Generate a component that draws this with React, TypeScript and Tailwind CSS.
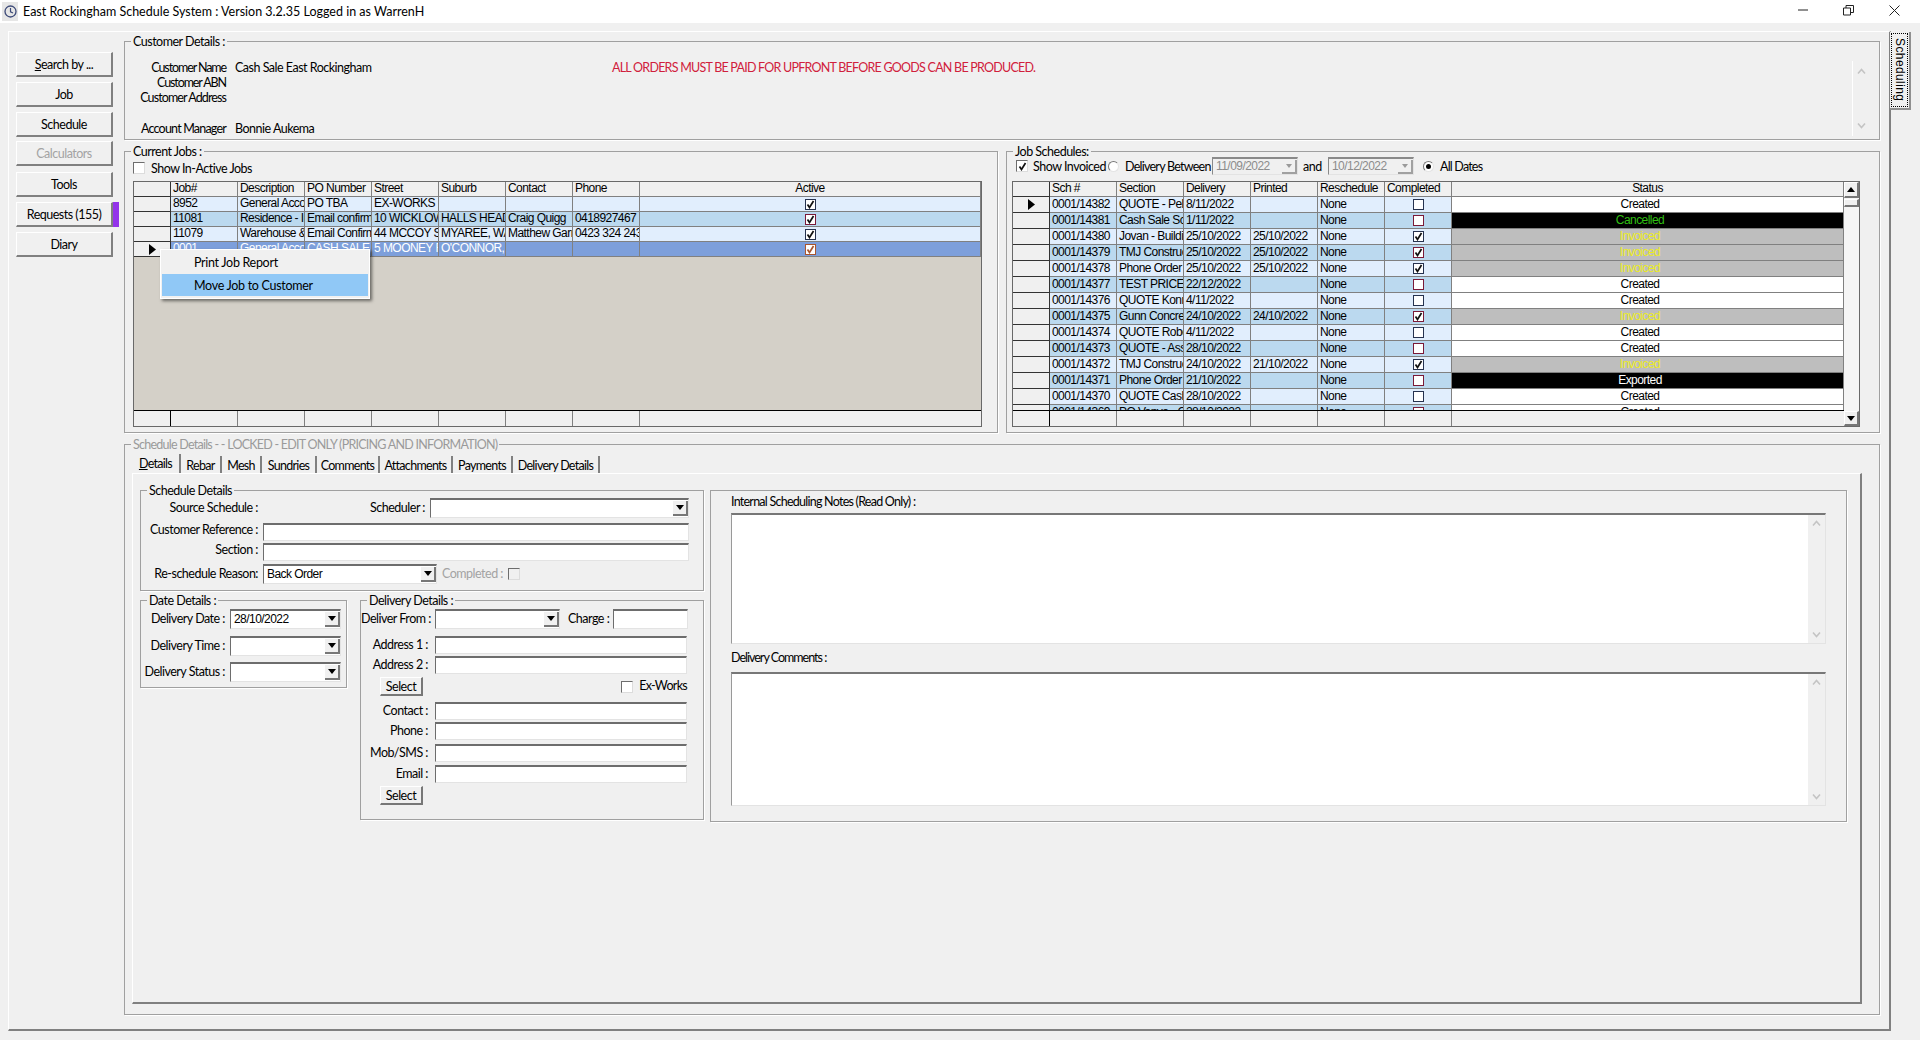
import React from "react";

type Kind = "light" | "dark" | "sel";

const rowBg: Record<Kind, string> = {
  light: "bg-[#e1eefd]",
  dark: "bg-[#bbd9ef]",
  sel: "bg-[#7d9fdb] text-white",
};
const checkBorder: Record<Kind, string> = {
  light: "border-[#26324f]",
  dark: "border-[#7a1a38]",
  sel: "border-[#a9552f]",
};

function Tri() {
  return (
    <svg width="7" height="11" viewBox="0 0 7 11">
      <path d="M0 0 L7 5.5 L0 11 Z" fill="#000" />
    </svg>
  );
}

function Chevron({ up, color = "#c4c4c4" }: { up?: boolean; color?: string }) {
  return (
    <svg width="9" height="7" viewBox="0 0 9 7">
      <path d={up ? "M1 5.5 L4.5 1.5 L8 5.5" : "M1 1.5 L4.5 5.5 L8 1.5"} fill="none" stroke={color} strokeWidth="1.6" />
    </svg>
  );
}

function Caret({ up }: { up?: boolean }) {
  return (
    <svg width="8" height="5" viewBox="0 0 8 5">
      <path d={up ? "M0 5 L4 0 L8 5 Z" : "M0 0 L8 0 L4 5 Z"} fill="#000" />
    </svg>
  );
}

function Check({ on, kind = "light" }: { on?: boolean; kind?: Kind }) {
  return (
    <span className={`flex h-[11px] w-[11px] items-center justify-center border bg-white ${checkBorder[kind]}`}>
      {on && (
        <svg width="9" height="9" viewBox="0 0 9 9">
          <path d="M1.5 4.5 L3.5 7.5 L7.5 1" fill="none" stroke={kind === "sel" ? "#a9552f" : "#111"} strokeWidth="1.7" />
        </svg>
      )}
    </span>
  );
}

function PlainCheck({ on, disabled }: { on?: boolean; disabled?: boolean }) {
  return (
    <span
      className={`flex h-[12px] w-[12px] shrink-0 items-center justify-center border border-t-[#6d6d6d] border-l-[#6d6d6d] border-r-[#dcdcdc] border-b-[#dcdcdc] ${disabled ? "bg-[#f0f0f0]" : "bg-white"}`}
    >
      {on && (
        <svg width="9" height="9" viewBox="0 0 9 9">
          <path d="M1.5 4.5 L3.5 7.5 L7.5 1" fill="none" stroke="#111" strokeWidth="1.7" />
        </svg>
      )}
    </span>
  );
}

function Radio({ on }: { on?: boolean }) {
  return (
    <span className="flex h-[11px] w-[11px] shrink-0 items-center justify-center rounded-full border border-t-[#777] border-l-[#777] border-r-[#e4e4e4] border-b-[#e4e4e4] bg-white">
      {on && <span className="h-[5px] w-[5px] rounded-full bg-black" />}
    </span>
  );
}

function Group({
  title,
  className,
  children,
  muted,
}: {
  title: string;
  className: string;
  children?: React.ReactNode;
  muted?: boolean;
}) {
  return (
    <div className={`relative border border-[#a0a0a0] shadow-[1px_1px_0_#fff] ${className}`}>
      {title && (
        <span
          className={`absolute -top-[8px] left-[6px] h-[15px] bg-[#f0f0f0] px-[2px] leading-[15px] ${muted ? "text-[#9a9a9a] tracking-[-0.75px]" : ""}`}
        >
          {title}
        </span>
      )}
      {children}
    </div>
  );
}

function Input({ className }: { className: string }) {
  return (
    <div
      className={`shrink-0 border-t-2 border-l border-r border-b border-t-[#6d6d6d] border-l-[#6d6d6d] border-r-[#e3e3e3] border-b-[#e3e3e3] bg-white ${className}`}
    />
  );
}

function Combo({ className, value }: { className: string; value?: string }) {
  return (
    <div
      className={`flex h-[20px] shrink-0 items-center justify-between border-t-2 border-l border-r border-b border-t-[#6d6d6d] border-l-[#6d6d6d] border-r-[#e3e3e3] border-b-[#e3e3e3] bg-white pl-[3px] ${className}`}
    >
      <span className="font-['Liberation_Sans',sans-serif] text-[12px] tracking-[-0.55px]">{value}</span>
      <span className="flex h-[15px] w-[15px] items-center justify-center border-r-2 border-b-2 border-r-[#777] border-b-[#777] bg-[#f0f0f0]">
        <Caret />
      </span>
    </div>
  );
}

function DateBox({ value }: { value: string }) {
  return (
    <div className="flex h-[18px] w-[86px] shrink-0 items-center justify-between border-t-2 border-l border-r border-b border-t-[#8a8a8a] border-l-[#8a8a8a] border-r-[#e3e3e3] border-b-[#e3e3e3] bg-[#f0f0f0] pl-[3px] font-['Liberation_Sans',sans-serif] text-[12px] tracking-[-0.55px] text-[#8c8c8c]">
      <span>{value}</span>
      <span className="flex h-[14px] w-[15px] items-center justify-center border-r-2 border-b-2 border-r-[#a0a0a0] border-b-[#a0a0a0] bg-[#f0f0f0]">
        <svg width="6" height="4" viewBox="0 0 6 4">
          <path d="M0 0 L6 0 L3 4 Z" fill="#9a9a9a" />
        </svg>
      </span>
    </div>
  );
}

function SmallButton() {
  return (
    <div className="flex h-[19px] w-[43px] shrink-0 items-center justify-center border-t border-l border-r-2 border-b-2 border-t-white border-l-white border-r-[#777] border-b-[#777]">
      Select
    </div>
  );
}

function Label({ className, children }: { className: string; children: React.ReactNode }) {
  return <span className={`shrink-0 pb-[2px] text-right ${className}`}>{children}</span>;
}

function SideButton({ children, disabled, className }: { children: React.ReactNode; disabled?: boolean; className: string }) {
  return (
    <div
      className={`flex h-[25px] w-[97px] items-center justify-center border-t border-l border-r-2 border-b-2 border-t-white border-l-white border-r-[#808080] border-b-[#808080] ${disabled ? "text-[#a3a3a3]" : ""} ${className}`}
    >
      {children}
    </div>
  );
}

const cell = "overflow-hidden border-r border-b border-r-[#808080] border-b-[#808080] px-[2px]";
const indCell = "flex items-center justify-center border-r border-b border-r-[#333] border-b-[#333] bg-[#f0f0f0]";

const jobCols = "grid grid-cols-[37px_67px_67px_67px_67px_67px_67px_67px_1fr]";
const jobHeads = ["Job#", "Description", "PO Number", "Street", "Suburb", "Contact", "Phone"];
const jobs: { kind: Kind; c: string[]; mark?: boolean }[] = [
  { kind: "light", c: ["8952", "General Account", "PO TBA", "EX-WORKS", "", "", ""] },
  { kind: "dark", c: ["11081", "Residence - Ironbark", "Email confirmation", "10 WICKLOW ST", "HALLS HEAD, WA", "Craig Quigg", "0418927467"] },
  { kind: "light", c: ["11079", "Warehouse & Office", "Email Confirmation", "44 MCCOY ST", "MYAREE, WA", "Matthew Garner", "0423 324 243"] },
  { kind: "sel", mark: true, c: ["0001", "General Account", "CASH SALE", "5 MOONEY RD", "O'CONNOR, WA", "", ""] },
];

const schCols = "grid grid-cols-[37px_67px_67px_67px_67px_67px_67px_1fr]";
const schHeads = ["Sch #", "Section", "Delivery", "Printed", "Reschedule", "Completed"];
type Status = "Created" | "Cancelled" | "Invoiced" | "Exported";
const statusCls: Record<Status, string> = {
  Created: "bg-white text-black",
  Cancelled: "bg-black text-[#2fbf12]",
  Invoiced: "bg-[#bebebe] text-[#ecec1e]",
  Exported: "bg-black text-white",
};
const schedules: [string, string, string, string, boolean, Status][] = [
  ["0001/14382", "QUOTE - Pella", "8/11/2022", "", false, "Created"],
  ["0001/14381", "Cash Sale Screen", "1/11/2022", "", false, "Cancelled"],
  ["0001/14380", "Jovan - Building", "25/10/2022", "25/10/2022", true, "Invoiced"],
  ["0001/14379", "TMJ Construction", "25/10/2022", "25/10/2022", true, "Invoiced"],
  ["0001/14378", "Phone Order", "25/10/2022", "25/10/2022", true, "Invoiced"],
  ["0001/14377", "TEST PRICE", "22/12/2022", "", false, "Created"],
  ["0001/14376", "QUOTE Konrad", "4/11/2022", "", false, "Created"],
  ["0001/14375", "Gunn Concrete", "24/10/2022", "24/10/2022", true, "Invoiced"],
  ["0001/14374", "QUOTE Robert", "4/11/2022", "", false, "Created"],
  ["0001/14373", "QUOTE - Assen", "28/10/2022", "", false, "Created"],
  ["0001/14372", "TMJ Construction", "24/10/2022", "21/10/2022", true, "Invoiced"],
  ["0001/14371", "Phone Order", "21/10/2022", "", false, "Exported"],
  ["0001/14370", "QUOTE Cash", "28/10/2022", "", false, "Created"],
  ["0001/14369", "PO Vanya - O", "28/10/2022", "", false, "Created"],
];

const tabs: [string, string][] = [
  ["Rebar", "w-[41px]"],
  ["Mesh", "w-[40px]"],
  ["Sundries", "w-[55px]"],
  ["Comments", "w-[63px]"],
  ["Attachments", "w-[73px]"],
  ["Payments", "w-[60px]"],
  ["Delivery Details", "w-[87px]"],
];

function JobsGrid() {
  return (
    <div className="relative flex h-[246px] w-[849px] flex-col border border-[#696969] font-['Liberation_Sans',sans-serif] text-[12px] leading-[13px] tracking-[-0.55px]">
      <div className={`${jobCols} h-[15px]`}>
        <div className={indCell} />
        {jobHeads.map((h) => (
          <div key={h} className={`${cell} bg-[#f0f0f0]`}>{h}</div>
        ))}
        <div className={`${cell} bg-[#f0f0f0] text-center`}>Active</div>
      </div>
      {jobs.map((r) => (
        <div key={r.c[0]} className={`${jobCols} h-[15px]`}>
          <div className={indCell}>{r.mark && <Tri />}</div>
          {r.c.map((t, i) => (
            <div key={i} className={`${cell} ${rowBg[r.kind]}`}>{t}</div>
          ))}
          <div className={`${cell} ${rowBg[r.kind]} flex items-center justify-center`}>
            <Check on kind={r.kind} />
          </div>
        </div>
      ))}
      <div className="flex-1 bg-[#d4d0c8]" />
      <div className={`${jobCols} h-[16px] border-t border-t-black`}>
        <div className="border-r border-r-black bg-[#f0f0f0]" />
        {[0, 1, 2, 3, 4, 5, 6, 7].map((i) => (
          <div key={i} className="border-r border-r-[#808080] bg-[#f0f0f0] last:border-r-0" />
        ))}
      </div>
      <div className="absolute left-[26px] top-[67px] z-10 h-[50px] w-[210px] border border-white bg-[#f0f0f0] p-[1px] font-['Lato',sans-serif] text-[12.5px] tracking-[-0.3px] shadow-[2px_2px_3px_rgba(0,0,0,0.5)]">
        <div className="flex h-[23px] items-center pl-[32px]">Print Job Report</div>
        <div className="flex h-[22px] items-center bg-[#90c8f6] pl-[32px]">Move Job to Customer</div>
      </div>
    </div>
  );
}

function SchedulesGrid() {
  return (
    <div className="flex h-[246px] w-[848px] border border-[#696969] font-['Liberation_Sans',sans-serif] text-[12px] leading-[14px] tracking-[-0.55px]">
      <div className="flex w-[831px] flex-col">
        <div className={`${schCols} h-[15px] leading-[13px]`}>
          <div className={indCell} />
          {schHeads.map((h) => (
            <div key={h} className={`${cell} bg-[#f0f0f0]`}>{h}</div>
          ))}
          <div className={`${cell} bg-[#f0f0f0] text-center`}>Status</div>
        </div>
        <div className="h-[214px] overflow-hidden">
          {schedules.map((r, i) => {
            const kind: Kind = i % 2 === 0 ? "light" : "dark";
            return (
              <div key={r[0]} className={`${schCols} h-[16px]`}>
                <div className={indCell}>{i === 0 && <Tri />}</div>
                <div className={`${cell} ${rowBg[kind]}`}>{r[0]}</div>
                <div className={`${cell} ${rowBg[kind]}`}>{r[1]}</div>
                <div className={`${cell} ${rowBg[kind]}`}>{r[2]}</div>
                <div className={`${cell} ${rowBg[kind]}`}>{r[3]}</div>
                <div className={`${cell} ${rowBg[kind]}`}>None</div>
                <div className={`${cell} ${rowBg[kind]} flex items-center justify-center`}>
                  <Check on={r[4]} kind={kind} />
                </div>
                <div className={`${cell} ${statusCls[r[5]]} pr-[17px] text-center`}>{r[5]}</div>
              </div>
            );
          })}
        </div>
        <div className={`${schCols} h-[16px] border-t border-t-black`}>
          <div className="border-r border-r-black bg-[#f0f0f0]" />
          {[0, 1, 2, 3, 4, 5, 6].map((i) => (
            <div key={i} className="border-r border-r-[#808080] bg-[#f0f0f0] last:border-r-0" />
          ))}
        </div>
      </div>
      <div className="flex w-[15px] flex-col bg-[#f5f5f5]">
        <div className="flex h-[16px] items-center justify-center border-t border-l border-r-2 border-b-2 border-t-white border-l-white border-r-[#777] border-b-[#777] bg-[#f0f0f0]">
          <Caret up />
        </div>
        <div className="mt-[1px] h-[8px] border-t border-l border-r-2 border-b-2 border-t-white border-l-white border-r-[#777] border-b-[#777] bg-[#f0f0f0]" />
        <div className="flex-1" />
        <div className="flex h-[15px] items-center justify-center border-t border-l border-r-2 border-b-2 border-t-white border-l-white border-r-[#777] border-b-[#777] bg-[#f0f0f0]">
          <Caret />
        </div>
      </div>
    </div>
  );
}

function NoteBox({ className }: { className: string }) {
  return (
    <div className={`ml-[20px] flex w-[1095px] border-t-2 border-l border-r border-b border-t-[#777] border-l-[#999] border-r-[#e3e3e3] border-b-[#e3e3e3] bg-white ${className}`}>
      <div className="flex-1" />
      <div className="flex w-[17px] flex-col items-center justify-between bg-[#f0f0f0] py-[5px]">
        <Chevron up />
        <Chevron />
      </div>
    </div>
  );
}

const labelD = "w-[67px]";

function DeliveryRow({ label, mt }: { label: string; mt: string }) {
  return (
    <div className={`flex h-[18px] items-center gap-[7px] ${mt}`}>
      <Label className={labelD}>{label}</Label>
      <Input className="h-[18px] w-[252px]" />
    </div>
  );
}

export default function App() {
  return (
    <div className="flex h-[1040px] w-[1920px] flex-col overflow-hidden whitespace-nowrap bg-[#f0f0f0] font-['Lato','Liberation_Sans',sans-serif] text-[12.5px] leading-[15px] tracking-[-0.5px] text-black">
      <div className="flex h-[23px] items-center bg-white tracking-normal">
        <div className="ml-[2px] flex h-[19px] w-[16px] items-center justify-center bg-[#e6e6e6]">
          <svg width="13" height="13" viewBox="0 0 13 13">
            <circle cx="6.5" cy="6.5" r="5.5" fill="none" stroke="#3d4a78" strokeWidth="1.3" />
            <path d="M6.5 3 V6.8 L9 8" fill="none" stroke="#3d4a78" strokeWidth="1.2" />
          </svg>
        </div>
        <span className="ml-[5px]">East Rockingham Schedule System : Version 3.2.35 Logged in as WarrenH</span>
        <div className="flex-1" />
        <svg width="10" height="10" viewBox="0 0 10 10" className="mb-[3px] mr-[35px]">
          <path d="M0 5 H10" stroke="#222" strokeWidth="1" />
        </svg>
        <svg width="11" height="11" viewBox="0 0 11 11" className="mb-[3px] mr-[35px]">
          <path d="M0.5 3 H7.5 V10 H0.5 Z M3 3 V0.5 H10.5 V7.5 H7.5" fill="none" stroke="#222" strokeWidth="1" />
        </svg>
        <svg width="11" height="11" viewBox="0 0 11 11" className="mb-[3px] mr-[20px]">
          <path d="M0.5 0.5 L10.5 10.5 M10.5 0.5 L0.5 10.5" stroke="#222" strokeWidth="1" />
        </svg>
      </div>

      <div className="flex pl-[8px] pt-[8px]">
        <div className="flex h-[1000px] w-[1883px] border-t border-l border-t-white border-l-white border-r-2 border-b-2 border-r-[#808080] border-b-[#808080]">
          <div className="ml-[7px] w-[103px] pt-[20px]">
            <SideButton className="">
              <span><u>S</u>earch by ...</span>
            </SideButton>
            <SideButton className="mt-[5px]">Job</SideButton>
            <SideButton className="mt-[5px]">Schedule</SideButton>
            <SideButton className="mt-[4px]" disabled>Calculators</SideButton>
            <SideButton className="mt-[6px]">Tools</SideButton>
            <div className="mt-[5px] flex">
              <SideButton className="">Requests (155)</SideButton>
              <div className="h-[25px] w-[6px] bg-[#9333ea]" />
            </div>
            <SideButton className="mt-[5px]">Diary</SideButton>
          </div>

          <div className="ml-[5px] w-[1756px] pt-[9px]">
            <Group title="Customer Details :" className="flex h-[99px]">
              <div className="flex-1 pt-[18px]">
                <div className="flex h-[15px] gap-[9px]">
                  <Label className="w-[101px] tracking-[-1.1px]">Customer Name</Label>
                  <span className="w-[368px]">Cash Sale East Rockingham</span>
                  <span className="text-[#d0203c] tracking-[-0.76px]">ALL ORDERS MUST BE PAID FOR UPFRONT BEFORE GOODS CAN BE PRODUCED.</span>
                </div>
                <div className="flex h-[15px] gap-[9px]">
                  <Label className="w-[101px] tracking-[-1.1px]">Customer ABN</Label>
                </div>
                <div className="flex h-[15px] gap-[9px]">
                  <Label className="w-[101px] tracking-[-0.9px]">Customer Address</Label>
                </div>
                <div className="mt-[16px] flex h-[15px] gap-[9px]">
                  <Label className="w-[101px] tracking-[-0.8px]">Account Manager</Label>
                  <span>Bonnie Aukema</span>
                </div>
              </div>
              <div className="mr-[9px] mt-[19px] flex h-[75px] w-[18px] flex-col items-center justify-between border-l border-l-white py-[7px]">
                <Chevron up />
                <Chevron />
              </div>
            </Group>

            <div className="mt-[11px] flex gap-[8px]">
              <Group title="Current Jobs :" className="h-[282px] w-[874px] pl-[8px] pt-[9px]">
                <div className="flex h-[14px] items-center gap-[6px]">
                  <PlainCheck />
                  <span>Show In-Active Jobs</span>
                </div>
                <div className="mt-[6px]">
                  <JobsGrid />
                </div>
              </Group>

              <Group title="Job Schedules:" className="h-[282px] w-[874px] pl-[5px] pt-[5px]">
                <div className="flex h-[18px] items-center pl-[4px]">
                  <PlainCheck on />
                  <span className="ml-[5px] w-[75px]">Show Invoiced</span>
                  <Radio />
                  <span className="ml-[6px] w-[87px] tracking-[-0.75px]">Delivery Between</span>
                  <DateBox value="11/09/2022" />
                  <span className="ml-[5px] w-[25px]">and</span>
                  <DateBox value="10/12/2022" />
                  <span className="ml-[9px]"><Radio on /></span>
                  <span className="ml-[6px] tracking-[-0.8px]">All Dates</span>
                </div>
                <div className="mt-[6px]">
                  <SchedulesGrid />
                </div>
              </Group>
            </div>

            <Group title="Schedule Details -  - LOCKED - EDIT ONLY (PRICING AND INFORMATION)" muted className="mt-[11px] h-[571px] pl-[7px] pt-[9px]">
              <div className="flex h-[19px] items-end tracking-[-0.7px]">
                <div className="flex h-[19px] w-[49px] items-center justify-center border-r-2 border-r-[#808080]">
                  <span><u>D</u>etails</span>
                </div>
                {tabs.map(([t, w]) => (
                  <div key={t} className={`flex h-[17px] items-center justify-center border-r-2 border-r-[#808080] pt-[2px] ${w}`}>{t}</div>
                ))}
              </div>
              <div className="flex h-[531px] w-[1730px] border-t border-l border-t-white border-l-white border-r-2 border-b-2 border-r-[#808080] border-b-[#808080] pl-[7px] pt-[16px]">
                <div className="w-[564px]">
                  <Group title="Schedule Details" className="h-[101px] pt-[7px]">
                    <div className="flex h-[20px] items-center">
                      <Label className="w-[117px]">Source Schedule :</Label>
                      <Label className="w-[167px]">Scheduler :</Label>
                      <Combo className="ml-[5px] w-[259px]" />
                    </div>
                    <div className="mt-[5px] flex h-[18px] items-center gap-[5px]">
                      <Label className="w-[117px] pb-[5px]">Customer Reference :</Label>
                      <Input className="h-[18px] w-[426px]" />
                    </div>
                    <div className="mt-[2px] flex h-[18px] items-center gap-[5px]">
                      <Label className="w-[117px] pb-[5px]">Section :</Label>
                      <Input className="h-[18px] w-[426px]" />
                    </div>
                    <div className="mt-[3px] flex h-[20px] items-center gap-[5px]">
                      <Label className="w-[117px]">Re-schedule Reason:</Label>
                      <Combo className="w-[174px]" value="Back Order" />
                      <span className="pb-[1px] text-[#a3a3a3]">Completed :</span>
                      <PlainCheck disabled />
                    </div>
                  </Group>

                  <div className="mt-[9px] flex items-start gap-[13px]">
                    <Group title="Date Details :" className="h-[88px] w-[207px] pt-[8px]">
                      <div className="flex h-[20px] items-center gap-[5px]">
                        <Label className="w-[84px]">Delivery Date :</Label>
                        <Combo className="w-[111px]" value="28/10/2022" />
                      </div>
                      <div className="mt-[7px] flex h-[20px] items-center gap-[5px]">
                        <Label className="w-[84px]">Delivery Time :</Label>
                        <Combo className="w-[111px]" />
                      </div>
                      <div className="mt-[6px] flex h-[20px] items-center gap-[5px]">
                        <Label className="w-[84px]">Delivery Status :</Label>
                        <Combo className="w-[111px]" />
                      </div>
                    </Group>

                    <Group title="Delivery Details :" className="h-[220px] w-[344px] pt-[8px]">
                      <div className="flex h-[20px] items-center gap-[7px]">
                        <Label className={labelD}>Deliver From :</Label>
                        <Combo className="w-[125px]" />
                        <Label className="ml-[1px] w-[40px]">Charge :</Label>
                        <Input className="-ml-[2px] h-[20px] w-[75px]" />
                      </div>
                      <DeliveryRow label="Address 1 :" mt="mt-[7px]" />
                      <DeliveryRow label="Address 2 :" mt="mt-[2px]" />
                      <div className="mt-[3px] flex h-[19px] items-center pl-[19px]">
                        <SmallButton />
                        <div className="flex-1" />
                        <PlainCheck />
                        <span className="ml-[6px] mr-[16px] pb-[2px] tracking-[-0.7px]">Ex-Works</span>
                      </div>
                      <DeliveryRow label="Contact :" mt="mt-[6px]" />
                      <DeliveryRow label="Phone :" mt="mt-[2px]" />
                      <DeliveryRow label="Mob/SMS :" mt="mt-[4px]" />
                      <DeliveryRow label="Email :" mt="mt-[3px]" />
                      <div className="mt-[3px] pl-[19px]">
                        <SmallButton />
                      </div>
                    </Group>
                  </div>
                </div>

                <Group title="" className="ml-[6px] h-[332px] w-[1137px] pt-[3px]">
                  <div className="ml-[20px] h-[15px] tracking-[-0.75px]">Internal Scheduling Notes (Read Only) :</div>
                  <NoteBox className="mt-[4px] h-[131px]" />
                  <div className="ml-[20px] mt-[6px] h-[15px] tracking-[-1px]">Delivery Comments :</div>
                  <NoteBox className="mt-[7px] h-[134px]" />
                </Group>
              </div>
            </Group>
          </div>
        </div>

        <div className="relative z-10 -ml-[1px] mt-[1px] h-[78px] w-[21px] border-r-2 border-b-2 border-r-[#909090] border-b-[#909090] bg-[#f0f0f0] p-[1px]">
          <div className="flex h-full items-center justify-center border border-dotted border-black font-['Liberation_Sans',sans-serif] text-[12px] tracking-[0.4px] [writing-mode:vertical-rl]">
            Scheduling
          </div>
        </div>
      </div>
    </div>
  );
}
